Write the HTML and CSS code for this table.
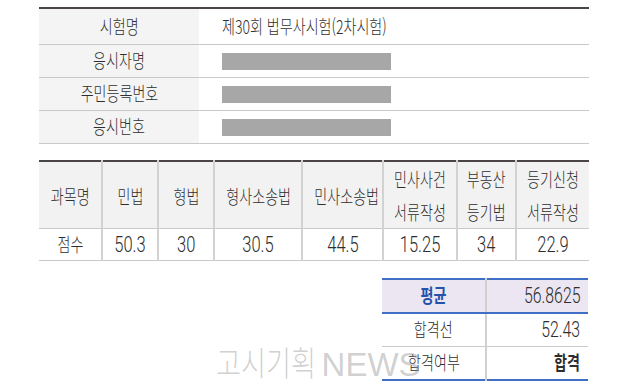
FILE: index.html
```html
<!DOCTYPE html>
<html lang="ko">
<head>
<meta charset="utf-8">
<link rel="stylesheet" href="styles.css">
</head>
<body>
<div class="page">
  <table class="info">
    <colgroup><col class="c-label"><col></colgroup>
    <tr class="first"><th><span class="k">시험명</span></th><td><span class="k kl">제30회 법무사시험(2차시험)</span></td></tr>
    <tr><th><span class="k">응시자명</span></th><td><div class="mask"></div></td></tr>
    <tr><th><span class="k">주민등록번호</span></th><td><div class="mask"></div></td></tr>
    <tr><th><span class="k">응시번호</span></th><td><div class="mask"></div></td></tr>
  </table>

  <table class="scores">
    <colgroup>
      <col style="width:63px"><col style="width:56px"><col style="width:56px"><col style="width:88px">
      <col style="width:81px"><col style="width:74px"><col style="width:59px"><col style="width:73px">
    </colgroup>
    <tr class="head">
      <th><span class="k">과목명</span></th>
      <th><span class="k">민법</span></th>
      <th><span class="k">형법</span></th>
      <th><span class="k">형사소송법</span></th>
      <th><span class="k">민사소송법</span></th>
      <th><span class="k">민사사건<br>서류작성</span></th>
      <th><span class="k">부동산<br>등기법</span></th>
      <th><span class="k">등기신청<br>서류작성</span></th>
    </tr>
    <tr class="vals">
      <td><span class="k">점수</span></td>
      <td><span class="d">50.3</span></td>
      <td><span class="d">30</span></td>
      <td><span class="d">30.5</span></td>
      <td><span class="d">44.5</span></td>
      <td><span class="d">15.25</span></td>
      <td><span class="d">34</span></td>
      <td><span class="d">22.9</span></td>
    </tr>
  </table>

  <div class="summary-wrap">
    <table class="summary">
      <tr class="avg"><th><span class="k kb">평균</span></th><td><span class="d dr">56.8625</span></td></tr>
      <tr class="line"><th><span class="k">합격선</span></th><td><span class="d dr">52.43</span></td></tr>
      <tr class="last"><th><span class="k">합격여부</span></th><td><span class="k kr kbold">합격</span></td></tr>
    </table>
  </div>

  <div class="watermark"><span class="wm-k">고시기획</span> <span class="wm-e">NEWS</span></div>
</div>
</body>
</html>
```

FILE: styles.css
```css
html, body {
  margin: 0;
  padding: 0;
  background: #ffffff;
}
body {
  font-family: "Noto Sans CJK KR", sans-serif;
  color: #2e2e2e;
}
.page {
  position: relative;
  width: 625px;
  height: 384px;
  padding: 7px 36px 0 39px;
  box-sizing: border-box;
  overflow: hidden;
}
table {
  border-collapse: collapse;
  table-layout: fixed;
}
th, td {
  padding: 0;
  font-weight: 400;
}
.k {
  display: inline-block;
  font-family: "Noto Sans CJK KR", sans-serif;
  font-size: 19px;
  font-weight: 300;
  line-height: 22px;
  transform: scaleX(0.74);
  transform-origin: center;
  white-space: nowrap;
}
.kl { transform-origin: left center; }
.kr { transform-origin: right center; }
.d {
  display: inline-block;
  font-family: Roboto, "Liberation Sans", sans-serif;
  font-size: 22px;
  font-weight: 300;
  line-height: 22px;
  color: #2e2e2e;
  transform: scaleX(0.75);
  transform-origin: center;
  white-space: nowrap;
}
.dr {
  transform: scaleX(0.72);
  transform-origin: right center;
}

/* top info table */
.info {
  width: 550px;
  border-top: 2px solid #4b4444;
}
.info .c-label { width: 160px; }
.info th {
  background: #f4f4f4;
  text-align: center;
  height: 32px;
  border-bottom: 1px solid #c9c9c9;
}
.info td {
  text-align: left;
  padding-left: 23px;
  border-bottom: 1px solid #c9c9c9;
}
.info tr.first th, .info tr.first td { height: 35px; }
.mask {
  width: 169px;
  height: 17px;
  background: #a7a7a7;
}

/* scores table */
.scores {
  width: 550px;
  margin-top: 16px;
  border-top: 2px solid #4b4444;
}
.scores th, .scores td {
  text-align: center;
  border-left: 2px solid #d2d2d2;
  border-bottom: 1px solid #c9c9c9;
}
.scores th:first-child, .scores td:first-child { border-left: none; }
.scores .head th {
  background: #f2f2f2;
  height: 63px;
}
.scores .head .k { line-height: 33px; }
.scores .vals td { height: 31px; }

/* summary table */
.summary-wrap {
  display: flex;
  justify-content: flex-end;
  margin-top: 17px;
  padding-right: 1px;
}
.summary {
  width: 206px;
  border-top: 2px solid #3f6fc4;
  border-bottom: 2px solid #3f6fc4;
}
.summary th {
  width: 103px;
  text-align: center;
  border-right: 2px solid #d0d0d0;
  height: 32px;
}
.summary td {
  text-align: right;
  padding-right: 8px;
}
.summary .avg th, .summary .avg td {
  background: #ebe6f1;
  border-bottom: 2px solid #3f6fc4;
}
.summary .line th, .summary .line td {
  border-bottom: 1px solid #c9c9c9;
}
.kb {
  color: #2552aa;
  font-weight: 700;
}
.kbold { font-weight: 700; }

.watermark {
  position: absolute;
  left: 216px;
  top: 342px;
  line-height: 40px;
  color: rgba(150, 150, 150, 0.45);
  white-space: nowrap;
  pointer-events: none;
}
.wm-k {
  display: inline-block;
  font-family: "Noto Sans CJK KR", sans-serif;
  font-size: 34px;
  font-weight: 300;
  transform: scaleX(0.8);
  transform-origin: left center;
  margin-right: -24px;
}
.wm-e {
  font-family: "Liberation Sans", sans-serif;
  font-size: 33px;
}
```
